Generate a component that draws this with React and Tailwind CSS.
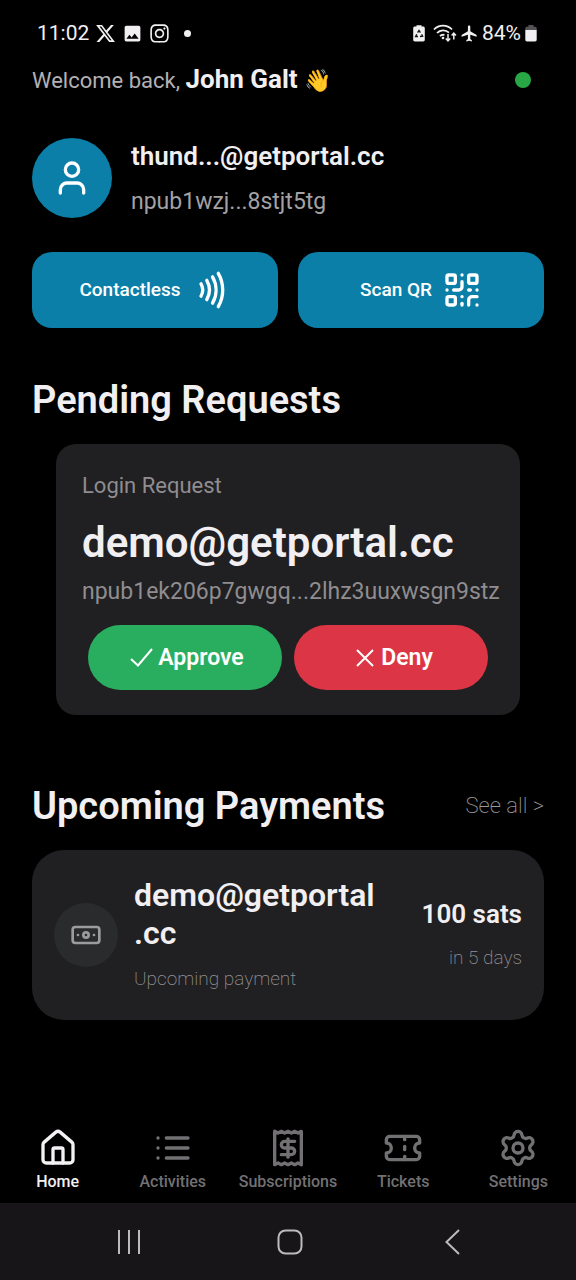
import React from 'react';
import { Banknote, House, Nfc, QrCode, Receipt, Settings, Ticket, User } from 'lucide-react';
import { FaInstagram, FaXTwitter } from 'react-icons/fa6';
import { MdFlight, MdImage } from 'react-icons/md';

function BatterySaverIcon() {
  return (
    <svg className="h-[18px] w-3" viewBox="0 0 12 18" aria-hidden="true">
      <path d="M3.5 1.2h5v1.4h1.6c1 0 1.7.7 1.7 1.7v11.4c0 1-.7 1.7-1.7 1.7H1.9c-1 0-1.7-.7-1.7-1.7V4.3c0-1 .7-1.7 1.7-1.7h1.6z" fill="#f1eff1" />
      <path d="M4.6 8.6 6 6.4l1.4 2.2M8.6 10.4l1 1.9-2.6.2M5 12.5H2.6l1.1-2.3" fill="none" stroke="#111" strokeWidth="1.3" />
    </svg>
  );
}

function WifiIcon() {
  return (
    <svg className="h-5 w-6" viewBox="0 0 24 20" fill="none" stroke="#f1eff1" strokeWidth="1.8" aria-hidden="true">
      <path d="M1 6.5a12.5 12.5 0 0 1 18 0M4 10a8.5 8.5 0 0 1 12-.3M7 13.2a4.3 4.3 0 0 1 4.5-1.2" />
      <circle cx="10" cy="15" r="1.3" fill="#f1eff1" stroke="none" />
      <path d="M15 11v6.5M12.8 15.5 15 17.8l2.2-2.3M20.8 16.5v-6M18.6 12.5l2.2-2.3 2.2 2.3" strokeWidth="1.5" />
    </svg>
  );
}

function BatteryIcon() {
  return (
    <svg className="h-[18px] w-3" viewBox="0 0 12 18" aria-hidden="true">
      <path d="M3.5 1h5v1.7H10c1 0 1.7.7 1.7 1.7V6H.3V4.4c0-1 .7-1.7 1.7-1.7h1.5z" fill="#555355" />
      <path d="M.3 6h11.4v9.7c0 1-.7 1.7-1.7 1.7H2c-1 0-1.7-.7-1.7-1.7z" fill="#f1eff1" />
    </svg>
  );
}

function ListIcon(props) {
  return (
    <svg viewBox="0 0 24 24" fill="none" stroke="currentColor" strokeWidth="2" strokeLinecap="round" aria-hidden="true" {...props}>
      <path d="M8 6h13M8 12h13M8 18h13M3 6h.01M3 12h.01M3 18h.01" />
    </svg>
  );
}

function StatusBar() {
  return (
    <div className="flex h-[60px] items-center justify-between pt-[6px] pr-[39px] pl-[37px] text-[#f1eff1]">
      <div className="flex items-center gap-[6px]">
        <span className="text-[21px] leading-6">11:02</span>
        <FaXTwitter className="size-[21px]" />
        <MdImage className="size-[21px]" />
        <FaInstagram className="size-[21px]" />
        <span className="ml-2 size-[7px] rounded-full bg-[#f1eff1]" />
      </div>
      <div className="flex items-center">
        <BatterySaverIcon />
        <span className="w-2" />
        <WifiIcon />
        <MdFlight className="mx-[3px] size-[19px]" />
        <span className="mr-1 text-[21px] leading-6">84%</span>
        <BatteryIcon />
      </div>
    </div>
  );
}

const tabs = [
  { label: 'Home', Icon: House, active: true },
  { label: 'Activities', Icon: ListIcon },
  { label: 'Subscriptions', Icon: Receipt },
  { label: 'Tickets', Icon: Ticket },
  { label: 'Settings', Icon: Settings },
];

function TabBar() {
  return (
    <nav className="mt-auto grid grid-cols-5 pb-[11px]">
      {tabs.map(({ label, Icon, active }) => (
        <a
          key={label}
          href={'#' + label.toLowerCase()}
          aria-current={active ? 'page' : undefined}
          className={
            'flex flex-col items-center gap-1 text-[16px] leading-5 font-medium ' +
            (active ? 'text-[#f3f1f3]' : 'text-[#727073]')
          }
        >
          <Icon className="size-10" />
          {label}
        </a>
      ))}
    </nav>
  );
}

function SystemNav() {
  return (
    <div className="grid h-[77px] grid-cols-3 items-center justify-items-center bg-[#171518] pr-11 pl-12 text-[#bdbbbd]">
      <button type="button" aria-label="Recent apps">
        <svg className="size-7" viewBox="0 0 28 28" fill="none" stroke="currentColor" strokeWidth="2">
          <path d="M4 2v24M14 2v24M24 2v24" />
        </svg>
      </button>
      <button type="button" aria-label="Home screen">
        <svg className="size-7" viewBox="0 0 28 28" fill="none" stroke="currentColor" strokeWidth="2">
          <rect x="2.5" y="2.5" width="23" height="23" rx="7" />
        </svg>
      </button>
      <button type="button" aria-label="Back">
        <svg className="size-7" viewBox="0 0 28 28" fill="none" stroke="currentColor" strokeWidth="2">
          <path d="M22 2 9.5 14 22 26" />
        </svg>
      </button>
    </div>
  );
}

export default function App() {
  return (
    <div className="flex min-h-screen flex-col bg-black font-[Roboto,'Liberation_Sans','Noto_Color_Emoji',sans-serif] text-[#f1eff1]">
      <StatusBar />

      <main className="flex flex-col px-8">
        <header className="flex h-10 items-center justify-between pr-[13px]">
          <p className="text-[22px] leading-7 text-[#b3b1b3]">
            Welcome back, <strong className="text-[26px] font-bold text-[#f1eff1]">John Galt <span className="text-[22px]">👋</span></strong>
          </p>
          <span className="size-4 rounded-full bg-[#2aa745]" role="img" aria-label="Online" />
        </header>

        <section className="mt-[38px] flex items-center gap-[19px]">
          <div className="flex size-20 items-center justify-center rounded-full bg-[#0b7fa7]">
            <User className="size-10 text-white" />
          </div>
          <div className="flex flex-col gap-[18px] pt-[2px]">
            <p className="text-[26px] leading-7 font-semibold">thund...@getportal.cc</p>
            <p className="text-[23px] leading-7 text-[#a3a1a3]">npub1wzj...8stjt5tg</p>
          </div>
        </section>

        <div className="mt-[34px] grid grid-cols-2 gap-5">
          <button type="button" className="flex h-[76px] items-center justify-center gap-[10px] rounded-[20px] bg-[#0b7fa7] text-[19px] font-medium text-white">
            Contactless
            <Nfc className="size-10" />
          </button>
          <button type="button" className="flex h-[76px] items-center justify-center gap-[10px] rounded-[20px] bg-[#0b7fa7] text-[19px] font-medium text-white">
            Scan QR
            <QrCode className="size-10" />
          </button>
        </div>

        <h2 className="mt-12 text-[38px] leading-[48px] font-semibold">Pending Requests</h2>

        <section className="mx-6 mt-5 rounded-[20px] bg-[#201f21] px-[26px] pt-7 pb-[25px]">
          <p className="text-[22px] leading-7 text-[#8f8d90]">Login Request</p>
          <h3 className="mt-4 text-[42px] leading-[54px] font-semibold">demo@getportal.cc</h3>
          <p className="mt-2 text-[23px] leading-7 whitespace-nowrap text-[#8f8d90]">npub1ek206p7gwgq...2lhz3uuxwsgn9stz</p>
          <div className="mt-[19px] grid grid-cols-2 gap-3 px-[6px]">
            <button type="button" className="flex h-[65px] items-center justify-center gap-1 rounded-full bg-[#29ae60] pt-[2px] pl-1 text-[23px] font-semibold text-white">
              <svg className="size-6" viewBox="0 0 24 24" fill="none" stroke="currentColor" strokeWidth="2" aria-hidden="true">
                <path d="M1 12l7 6.5L22 2" />
              </svg>
              Approve
            </button>
            <button type="button" className="flex h-[65px] items-center justify-center gap-1 rounded-full bg-[#dc3545] pt-[2px] pl-1 text-[23px] font-semibold text-white">
              <svg className="size-6" viewBox="0 0 24 24" fill="none" stroke="currentColor" strokeWidth="2" aria-hidden="true">
                <path d="M4 3l16 16M20 3L4 19" />
              </svg>
              Deny
            </button>
          </div>
        </section>

        <div className="mt-[67px] flex items-center justify-between">
          <h2 className="text-[38px] leading-[48px] font-semibold">Upcoming Payments</h2>
          <a href="#payments" className="text-[22px] leading-7 font-extralight text-[#9a989b]">See all &gt;</a>
        </div>

        <section className="mt-5 flex items-center rounded-[32px] bg-[#201f21] px-[22px] py-[26px]">
          <div className="flex size-16 shrink-0 items-center justify-center rounded-full bg-[#2a2b2d]">
            <Banknote className="size-8 text-[#9a9c9d]" />
          </div>
          <div className="ml-4 min-w-0 flex-1">
            <h3 className="text-[32px] leading-[38px] font-semibold">demo@getportal<br />.cc</h3>
            <p className="mt-[14px] pb-[2px] text-[19px] leading-[26px] font-extralight text-[#929093]">Upcoming payment</p>
          </div>
          <div className="ml-4 flex shrink-0 flex-col gap-4 pb-[3px] text-right">
            <p className="text-[26px] leading-8 font-semibold">100 sats</p>
            <p className="text-[19px] leading-6 font-extralight text-[#929093]">in 5 days</p>
          </div>
        </section>
      </main>

      <TabBar />
      <SystemNav />
    </div>
  );
}
